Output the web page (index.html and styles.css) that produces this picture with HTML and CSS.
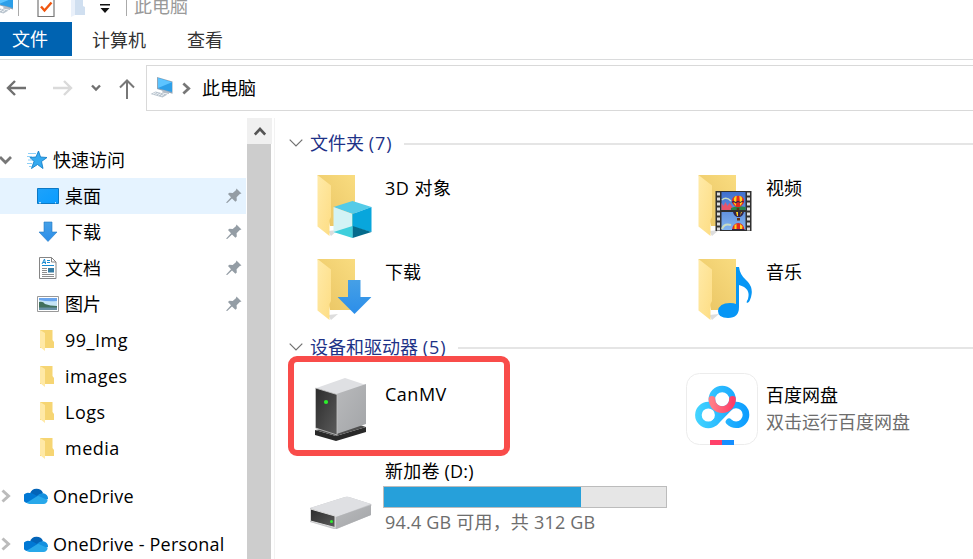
FILE: index.html
```html
<!DOCTYPE html>
<html lang="zh-CN">
<head>
<meta charset="utf-8">
<title>此电脑</title>
<link rel="stylesheet" href="styles.css">
</head>
<body>
<svg class="defs" width="0" height="0" aria-hidden="true">
  <defs>
    <linearGradient id="gBack" x1="0" y1="1" x2="1" y2="0"><stop offset="0" stop-color="#e9c462"/><stop offset="1" stop-color="#f9dc80"/></linearGradient>
    <linearGradient id="gFlap" x1="0" y1="0" x2="1" y2="1"><stop offset="0" stop-color="#ffeaa8"/><stop offset="1" stop-color="#fddd84"/></linearGradient>
    <linearGradient id="gBlue" x1="0" y1="0" x2="1" y2="1"><stop offset="0" stop-color="#1ea2fb"/><stop offset="1" stop-color="#0a9cff"/></linearGradient>
    <linearGradient id="gArrow" x1="0" y1="0" x2="0" y2="1"><stop offset="0" stop-color="#46a0e6"/><stop offset="1" stop-color="#2b8eea"/></linearGradient>
    <linearGradient id="gSky" x1="0" y1="0" x2="0" y2="1"><stop offset="0" stop-color="#3f6fce"/><stop offset="1" stop-color="#82b4ef"/></linearGradient>
    <linearGradient id="gSide" x1="0" y1="0" x2="1" y2="1"><stop offset="0" stop-color="#b9babc"/><stop offset="1" stop-color="#a3a5a8"/></linearGradient>
    <linearGradient id="gFront" x1="0" y1="0" x2="1" y2="1"><stop offset="0" stop-color="#2c2c2c"/><stop offset="1" stop-color="#5b5b5b"/></linearGradient>
    <linearGradient id="gPan" gradientUnits="userSpaceOnUse" x1="9" y1="0" x2="63" y2="0"><stop offset="0" stop-color="#45d5ff"/><stop offset="1" stop-color="#0b9bff"/></linearGradient>
    <linearGradient id="gPink" x1="0" y1="0" x2="1" y2="0"><stop offset="0" stop-color="#ff7d86"/><stop offset="1" stop-color="#ff3f68"/></linearGradient>
    <symbol id="folder" viewBox="0 0 72 72">
      <path d="M23 60l10-1-7 6z" fill="#ddd"/>
      <path d="M12.500 4H50v51H25z" fill="url(#gBack)"/>
      <path d="M12.500 4l13.500 10.500V46l-1.500 3v16l-12-9.500z" fill="url(#gFlap)"/>
    </symbol>
    <symbol id="folder-small" viewBox="0 0 24 24">
      <path d="M4 2h12.500v10l1.500 2v6H4z" fill="#f6d573"/>
      <path d="M4 2l5 3v18l-5-4z" fill="#ffe9a6"/>
    </symbol>
    <symbol id="pc" viewBox="0 0 24 24">
      <path d="M7 1l15.500 4.500v12.200L7 13z" fill="#8fa5b8"/>
      <path d="M8 2l14 4.200V16L8 12.300z" fill="#2d9fe8"/>
      <path d="M8 2l14 4.200L8 12z" fill="#5cc4ff"/>
      <path d="M13 14l6 2v2l-7-1.500z" fill="#b5bec8"/>
      <path d="M.5 18l5-2.500 12 3-5 3z" fill="#b9c4ce"/>
      <path d="M3 18l3-1.400m-.5 2l3-1.500m-.5 2.200l3-1.600m0 2.200l3-1.500" stroke="#eef2f5"/>
    </symbol>
    <symbol id="pin" viewBox="0 0 16 16">
      <path d="M10.500.5l5 5-1.700.4-3.200 3.300.2 3.200-1.400 1.300L6 10.400 1.200 15H.4v-.8L5 9.300 2 6l1.400-1.200 3.300.1 3.200-2.600z" fill="#949da5"/>
    </symbol>
    <symbol id="cloud" viewBox="0 0 24 16">
      <path d="M6 5.500A7 7 0 0 1 19 5l-5 5z" fill="#0364b8"/>
      <path d="M5.500 5a7 7 0 0 1 4 1l9 5-16 4A5.200 5.200 0 0 1 5.500 5z" fill="#0078d4"/>
      <path d="M13 8a7 7 0 0 1 6.500-2.800A5.400 5.400 0 0 1 24 11l-4 2z" fill="#1490df"/>
      <path d="M3 14.500l11-6.700 9.600 4.200A4.500 4.500 0 0 1 19.500 16H5.500A6 6 0 0 1 2 14.600z" fill="#28a8ea"/>
    </symbol>
    <symbol id="down" viewBox="0 0 34 34"><path d="M10.500 0h12.500v17h11L17 34 0 17h10.500z" fill="url(#gArrow)"/></symbol>
    <symbol id="chev-right" viewBox="0 0 10 14"><path d="M1.500 1.500L7.500 7l-6 5.500" fill="none" stroke="currentColor" stroke-width="3"/></symbol>
    <symbol id="chev-group" viewBox="0 0 14 8"><path d="M.7.700L7 7 13.300.7" fill="none" stroke="#707070" stroke-width="1.200"/></symbol>
    <symbol id="balloon" viewBox="0 0 14 17">
      <path d="M0 6a7 6 0 0 1 14 0q0 4-5 7H5Q0 10 0 6z" fill="#e42b20"/>
      <path d="M2.300 3Q4 0 5.500.200L4.600 12 2.500 9zM8.500.200Q11 .5 11.800 3l-.4 6L9.500 12z" fill="#ffd21c"/>
      <path d="M0 7l2-1 2.500 1.500L7 6l2.500 1.500L12 6l2 1v1l-2-1-2.500 1.500L7 7.500 4.500 9 2 7.500 0 8.500z" fill="#322249"/>
      <path d="M5.500 14h3v2.500h-3z" fill="#613017"/>
    </symbol>
  </defs>
</svg>

<div class="window">
  <header class="titlebar">
    <svg class="title-pc" width="22" height="24"><use href="#pc" width="24" height="24"/></svg>
    <span class="title-sep"></span>
    <svg class="title-check" width="18" height="22" viewBox="0 0 18 22"><path d="M1 0v20.500h16V0" fill="#fff" stroke="#777" stroke-width="1.200"/><path d="M4 10.500l3.500 4 7-8" fill="none" stroke="#f0560f" stroke-width="2.400"/></svg>
    <svg class="title-folder" width="16" height="20" viewBox="0 0 16 20"><path d="M1 0h12v9l2 1v8H1z" fill="#d0dff0"/><path d="M1 0h4v18l-4 2z" fill="#e9f0fa"/></svg>
    <svg class="title-menu" width="10" height="10" viewBox="0 0 10 10"><path d="M0 0h10v1.500H0zM.5 4h9L5 9z" fill="#111"/></svg>
    <span class="title-sep second"></span>
    <span class="title-text">此电脑</span>
  </header>

  <nav class="tabs">
    <span class="tab file">文件</span><span class="tab">计算机</span><span class="tab">查看</span>
  </nav>

  <div class="toolbar">
    <svg width="20" height="18" viewBox="0 0 20 18" class="back"><path d="M9 2L2 9l7 7M2 9h18" fill="none" stroke="#707070" stroke-width="2.400"/></svg>
    <svg width="20" height="18" viewBox="0 0 20 18" class="forward"><path d="M11 2l7 7-7 7M18 9H0" fill="none" stroke="#dadada" stroke-width="2.400"/></svg>
    <svg width="10" height="8" viewBox="0 0 10 8" class="recent"><path d="M1 1.500l4 4 4-4" fill="none" stroke="#707070" stroke-width="2.400"/></svg>
    <svg width="16" height="20" viewBox="0 0 16 20" class="up"><path d="M1 8.500L8 1.500l7 7M8 1.500V20" fill="none" stroke="#777" stroke-width="2"/></svg>
    <div class="address">
      <svg width="24" height="24"><use href="#pc"/></svg>
      <svg class="crumb" width="9" height="13"><use href="#chev-right"/></svg>
      <span>此电脑</span>
    </div>
  </div>

  <div class="body">
    <aside class="sidebar">
      <div class="row root">
        <svg class="twist" width="12" height="10" viewBox="0 0 12 10"><path d="M0 2l5.500 5.500L11 2" fill="none" stroke="#777" stroke-width="2.800"/></svg>
        <svg class="root-icon" width="24" height="20" viewBox="0 0 24 20"><path d="M14.500 1l2 6 6.500.500-5.500 4 1.500 7-5.500-4-6 4 2.500-7-4-4 6-.5z" fill="#35aaf0" stroke="#1680c8" stroke-width=".9"/><path d="M4 3.500h8M3 6.500h5M4 10h4M3 13.500h5M5 16.500h3" stroke="#8ed0f7" stroke-width="1.100"/></svg>
        <span class="name">快速访问</span>
      </div>
      <div class="row child selected">
        <svg width="24" height="24" viewBox="0 0 24 24"><path d="M1.500 4.500h21v15h-21z" fill="url(#gBlue)" stroke="#0c78c4"/><path d="M3 18.800h18" stroke="#fff" stroke-dasharray="2 14 1 1"/></svg>
        <span class="name">桌面</span><svg class="pin" width="16" height="16"><use href="#pin"/></svg>
      </div>
      <div class="row child">
        <svg width="24" height="24" viewBox="0 0 24 24"><path d="M8 2h8v10h5l-9 9.500L3 12h5z" fill="url(#gArrow)" stroke="#2478c5" stroke-width=".6"/></svg>
        <span class="name">下载</span><svg class="pin" width="16" height="16"><use href="#pin"/></svg>
      </div>
      <div class="row child">
        <svg width="24" height="24" viewBox="0 0 24 24"><path d="M3.500 1.500h12l4.500 4.500v16.500H3.500z" fill="#fff" stroke="#858585"/><path d="M15.500 1.500V6H20" fill="none" stroke="#858585"/><path d="M6 8l2.500-5L9.500 8M7 6.500h3M11 4.500h3M11 6.500h3M6 9.500h12" fill="none" stroke="#198bd2"/><path d="M6 12.500h5M6 14.500h5M6 16.500h5M6 18.500h12M6 20.500h12" stroke="#8d8d8d"/><path d="M12 12h6v4.500h-6z" fill="#357ca4"/></svg>
        <span class="name">文档</span><svg class="pin" width="16" height="16"><use href="#pin"/></svg>
      </div>
      <div class="row child">
        <svg width="24" height="24" viewBox="0 0 24 24"><path d="M1.500 4.500h21v15h-21z" fill="#fff" stroke="#999"/><path d="M3 6h18v12H3z" fill="#6aa5ee"/><path d="M3 8q9 2 18 1v6H3z" fill="#c5e4f5"/><path d="M3 10q4-1 6 2 5 2 12 2v2H3z" fill="#41705b"/><path d="M3 15.500h18V18H3z" fill="#668fa4"/></svg>
        <span class="name">图片</span><svg class="pin" width="16" height="16"><use href="#pin"/></svg>
      </div>
      <div class="row child"><svg width="24" height="24"><use href="#folder-small"/></svg><span class="name wide">99_Img</span></div>
      <div class="row child"><svg width="24" height="24"><use href="#folder-small"/></svg><span class="name wide">images</span></div>
      <div class="row child"><svg width="24" height="24"><use href="#folder-small"/></svg><span class="name wide">Logs</span></div>
      <div class="row child"><svg width="24" height="24"><use href="#folder-small"/></svg><span class="name wide">media</span></div>
      <div class="row root drive">
        <svg class="twist light" width="10" height="14"><use href="#chev-right"/></svg>
        <svg class="root-icon" width="24" height="16"><use href="#cloud"/></svg><span class="name latin">OneDrive</span>
      </div>
      <div class="row root drive">
        <svg class="twist light" width="10" height="14"><use href="#chev-right"/></svg>
        <svg class="root-icon" width="24" height="16"><use href="#cloud"/></svg><span class="name latin">OneDrive - Personal</span>
      </div>
    </aside>
    <div class="scrollbar">
      <div class="scroll-up"><svg width="12" height="10" viewBox="0 0 12 10"><path d="M.8 8.500L6 3l5.200 5.500" fill="none" stroke="#555" stroke-width="2.600"/></svg></div>
    </div>

    <main class="content">
      <h2 class="group"><svg width="14" height="8"><use href="#chev-group"/></svg><span>文件夹 <b>(7)</b></span><i></i></h2>
      <section class="grid folders">
        <div class="tile">
          <svg width="72" height="72" viewBox="0 0 72 72"><use href="#folder"/>
            <path d="M28.500 36L47.500 30l19 6-19 7z" fill="#54cbe8"/><path d="M28.500 36l19 7v17l-19 2z" fill="#d3f3f5"/><path d="M47.500 43l19-7v25l-19-5z" fill="#08a6dc"/><path d="M28.500 61l19-6v12z" fill="#3fcfdc"/><path d="M47.500 55l19 6-19 6z" fill="#056b8c"/><path d="M47.500 43v24" stroke="#35bfd3" stroke-width=".6"/></svg>
          <div class="info"><div class="label wide">3D 对象</div></div>
        </div>
        <div class="tile">
          <svg width="72" height="72" viewBox="0 0 72 72"><use href="#folder"/>
            <path d="M29.500 20h36v40h-36z" fill="#303030"/><path d="M35.500 21h24v18h-24zM35.500 41h24v18h-24z" fill="url(#gSky)"/>
            <path d="M35.500 39v-7l2 3 2-4 2 4 2-3 3 4v3z" fill="#e8546a"/><path d="M36 29q4-4 9 1" fill="none" stroke="#c9dcc0" stroke-width="1.600"/><path d="M45 37q6-3 14.500-1v3H45z" fill="#27864a"/><path d="M36 58q2-6 9-4" fill="none" stroke="#c9dcc0" stroke-width="2"/>
            <use href="#balloon" x="45.500" y="24.500" width="13" height="15"/>
            <path d="M47 41h11q-1 4-4 5h-3q-3-1-4-5z" fill="#322249"/><path d="M50 41h2v4h-1zM55 41h1l-2 4z" fill="#ffd21c"/><path d="M51 47h3v2.500h-3z" fill="#613017"/>
            <path d="M46 59a6.200 7 0 0 1 12.500 0z" fill="#e42b20"/><path d="M48.500 54l2-1v6h-2zM54 53l2.500 2-.5 4h-2z" fill="#ffd21c"/><path d="M46 58h12.500v1H46z" fill="#322249"/>
            <path d="M32.500 21.500v38M62.500 21.500v38" stroke="#ddd" stroke-width="3" stroke-dasharray="3 2"/></svg>
          <div class="info"><div class="label">视频</div></div>
        </div>
        <div class="tile">
          <svg width="72" height="72" viewBox="0 0 72 72"><use href="#folder"/><use href="#down" x="32.500" y="25" width="34" height="34"/></svg>
          <div class="info"><div class="label">下载</div></div>
        </div>
        <div class="tile">
          <svg width="72" height="72" viewBox="0 0 72 72"><use href="#folder"/><path d="M50 12h3q1 8 7 13 9 8 4 20-1 3-3 3-1-1 1-4 3-11-9-14v22q0 11-11 11-10 0-10-7 1-8 12-8 4 0 6 1z" fill="#0796f5"/></svg>
          <div class="info"><div class="label">音乐</div></div>
        </div>
      </section>

      <h2 class="group"><svg width="14" height="8"><use href="#chev-group"/></svg><span>设备和驱动器 <b>(5)</b></span><i></i></h2>
      <section class="grid devices">
        <div class="tile">
          <svg width="72" height="72" viewBox="0 0 72 72"><path d="M10 57l21 6 30-9v5L31 68l-21-6z" fill="#292929"/><path d="M10 57l21 6 30-9-9-3z" fill="#505050"/><path d="M10 15.500L40 5l21 7-29 10z" fill="#dfe0e3"/><path d="M31.500 21L61 11v40L31.500 61z" fill="url(#gSide)"/><path d="M10.500 15L32 21.500V62l-21.500-7z" fill="url(#gFront)" stroke="#c7c7c7" stroke-width=".8"/><circle cx="21" cy="29" r="2.100" fill="#2bf12b"/></svg>
          <div class="info"><div class="label wide">CanMV</div></div>
        </div>
        <div class="tile">
          <svg width="72" height="72" viewBox="0 0 72 72"><rect x=".5" y=".5" width="71" height="71" rx="13" fill="#fff" stroke="#ececec"/>
            <g fill="none" stroke-width="6.600" stroke-linecap="round"><circle cx="36.200" cy="26.300" r="10.300" stroke="url(#gPan)"/><circle cx="22.300" cy="42" r="9.900" stroke="url(#gPan)"/><path d="M29.200 49.200L42.800 35.200A9.900 9.900 0 1 1 43 48.800" stroke="url(#gPan)"/><path d="M25.900 26.300a10.300 10.300 0 0 0 20.600 0" stroke="url(#gPink)"/></g>
            <path d="M24 67h12v5H24z" fill="#ff416a"/><path d="M36 67h12v5H36z" fill="#168fff"/></svg>
          <div class="info"><div class="label">百度网盘</div><div class="sub">双击运行百度网盘</div></div>
        </div>
        <div class="tile disk">
          <svg width="72" height="72" viewBox="0 0 72 72"><path d="M5 51l35-11q2-.5 4 0l22 7q1 1 0 2v9L33 71.500q-3 1-6 0L5 65z" fill="#c5c6c9"/><path d="M5 51l35-11q2-.5 4 0l22 7-35 13z" fill="#dfe0e3"/><path d="M31 60l35-12v10L31 72z" fill="url(#gSide)"/><path d="M5.500 52L30 59v11.500L5.500 64z" fill="url(#gFront)" stroke="#ddd" stroke-width="1"/><circle cx="26.500" cy="64.500" r="1.500" fill="#2ef02e"/></svg>
          <div class="info"><div class="label latin">新加卷 (D:)</div><div class="meter"><div class="used"></div></div><div class="sub latin">94.4 GB 可用，共 312 GB</div></div>
        </div>
      </section>
      <div class="highlight"></div>
    </main>
  </div>
</div>
</body>
</html>
```
FILE: styles.css
```css
* { box-sizing: border-box; }
body {
  margin: 0;
  overflow: hidden;
  background: #fff;
  color: #000;
  font: 18px/24px "Open Sans", "Noto Sans CJK SC", sans-serif;
}
svg { display: block; flex: none; }
.defs { position: absolute; }
.window { width: 973px; height: 559px; overflow: hidden; display: flex; flex-direction: column; }
.latin { letter-spacing: .2px; }
.wide { letter-spacing: .5px; }

.titlebar { height: 22px; flex: none; display: flex; align-items: flex-start; overflow: hidden; color: #999; }
.title-pc { margin: -8px 0 0 -9px; }
.title-sep { width: 1px; height: 16px; background: #aaa; margin-left: 5px; }
.title-check { margin: -4px 0 0 18px; }
.title-folder { margin: -3px 0 0 15px; }
.title-menu { margin: 4px 0 0 14px; }
.title-sep.second { margin-left: 16px; }
.title-text { margin: -6px 0 0 7px; }

.tabs { height: 38px; flex: none; display: flex; align-items: flex-start; border-bottom: 1px solid #dadbdc; }
.tab { height: 34px; line-height: 36px; padding: 0 20px; color: #333; }
.tab.file { width: 72px; padding: 0 12px; background: #0063b1; color: #fff; line-height: 34px; }
.tab + .tab:last-child { padding-left: 21px; }

.toolbar { height: 58px; flex: none; display: flex; align-items: center; padding-bottom: 2px; }
.back { margin-left: 6px; }
.forward { margin-left: 27px; }
.recent { margin-left: 18px; }
.up { margin: 2px 0 0 18px; }
.address { flex: 1; height: 46px; margin: 0 -2px 0 11px; border: 1px solid #d9d9d9; display: flex; align-items: center; padding-left: 3px; }
.crumb { color: #777; margin: 1px 11px 0 8px; }
.address span { margin-top: -1px; }

.body { flex: 1; min-height: 0; display: flex; }
.sidebar { width: 247px; flex: none; padding-top: 24px; }
.row { height: 36px; width: 246px; display: flex; align-items: center; }
.child { padding: 0 4px 0 36px; }
.child .name { margin-left: 5px; }
.selected { background: #e5f3ff; }
.pin { margin-left: auto; }
.twist { width: 12px; }
.twist.light { color: #bbb; }
.root-icon { margin-left: 12px; }
.root .name { margin-left: 5px; white-space: nowrap; }
.drive { margin-top: 12px; }
.scrollbar { width: 28px; flex: none; border-right: 1px solid #f2f2f2; background: linear-gradient(to right, #cdcdcd 24px, #fff 24px); }
.scroll-up { width: 25px; height: 26px; background: #f0f0f0; display: flex; align-items: center; justify-content: center; }

.content { flex: 1; min-width: 0; padding-left: 14px; position: relative; }
.group { height: 24px; margin: 13px 0 0; display: flex; align-items: center; color: #1e3287; font-size: 18px; font-weight: 400; white-space: nowrap; }
.group span { margin-left: 7px; }
.group b { font-weight: 400; letter-spacing: 1px; }
.group i { flex: 1; height: 2px; background: #e5e5e5; margin: 2px 0 0 11px; }
.grid { display: grid; grid-template-columns: 381px 381px; grid-auto-rows: 84px; margin: 10px 0 0 16px; }
.folders + .group { margin-top: 2px; }
.devices { margin-top: 8px; }
.tile { display: flex; padding-top: 6px; }
.info { margin: 5px 0 0 8px; white-space: nowrap; }
.devices .info { margin-top: 10px; }
.devices .tile:first-child .info { margin-top: 9px; }
.devices .disk .info { margin-top: 2px; }
.sub { color: #6d6d6d; margin-top: 3px; }
.meter { width: 284px; height: 22px; margin: 3px 0 0 -2px; border: 1px solid #bcbcbc; background: #e6e6e6; }
.used { width: 70%; height: 100%; background: #26a0da; }
.disk .sub { margin-top: 2px; }
.highlight { position: absolute; left: 13px; top: 238px; width: 222px; height: 100px; border: 6px solid #f94c4a; border-radius: 9px; }
```
